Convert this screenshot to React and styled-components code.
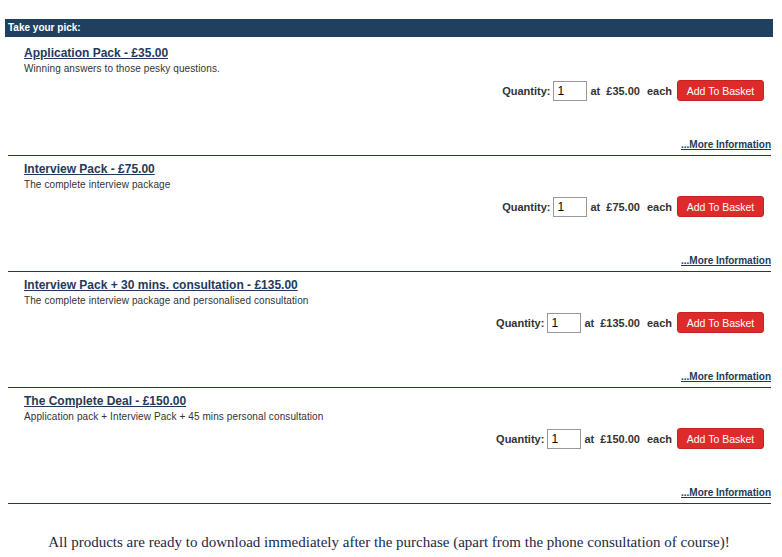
import React from "react";
import styled, { createGlobalStyle } from "styled-components";

const Global = createGlobalStyle`
  html, body { margin: 0; padding: 0; background: #fff; }
  body { font-family: "Liberation Sans", Arial, sans-serif; }
`;

const Page = styled.div`
  width: 768px;
  padding: 19px 0 0 5px;
`;

const Header = styled.div`
  height: 18px;
  background: #1f405e;
  color: #fff;
  font-size: 10px;
  font-weight: bold;
  line-height: 18px;
  padding-left: 3px;
`;

const List = styled.div`
  margin: 0 2px 0 3px;
`;

const Product = styled.div`
  display: flex;
  flex-direction: column;
  box-sizing: border-box;
  height: ${(p) => (p.$first ? 119 : 116)}px;
  padding: ${(p) => (p.$first ? 9 : 6)}px 0 4px 16px;
  border-bottom: 1px solid #1f3a55;
`;

const Title = styled.a`
  font-size: 12px;
  line-height: 14px;
  font-weight: bold;
  color: #1f3a5a;
  text-decoration: underline;
  align-self: flex-start;
`;

const Desc = styled.div`
  font-size: 10px;
  line-height: 13px;
  letter-spacing: 0.1px;
  color: #333;
  margin-top: 2px;
`;

const BuyRow = styled.div`
  display: flex;
  justify-content: flex-end;
  align-items: center;
  margin-top: 5px;
  padding-right: 7px;
  font-size: 11px;
  font-weight: bold;
  color: #333;
`;

const Label = styled.span`
  margin-right: ${(p) => p.$mr || 0}px;
`;

const QtyInput = styled.input`
  box-sizing: border-box;
  width: 34px;
  height: 20px;
  border: 1px solid #999;
  font-family: "Liberation Sans", Arial, sans-serif;
  font-size: 12px;
  padding: 0 3px;
  margin-right: 3px;
  color: #000;
`;

const BasketButton = styled.button`
  box-sizing: border-box;
  width: 87px;
  height: 21px;
  background: #dd2a2a;
  border: 1px solid #c62222;
  border-radius: 3px;
  color: #fff;
  font-family: "Liberation Sans", Arial, sans-serif;
  font-size: 10.5px;
  padding: 0;
  cursor: pointer;
`;

const MoreInfo = styled.a`
  margin-top: auto;
  align-self: flex-end;
  font-size: 10px;
  line-height: 13px;
  font-weight: bold;
  color: #1f3a5a;
  text-decoration: underline;
`;

const Footer = styled.div`
  padding-top: 29px;
  text-align: center;
  font-family: "Liberation Serif", "Times New Roman", serif;
  font-size: 15px;
  line-height: 18px;
  color: #1c2848;
`;

const products = [
  { title: "Application Pack - £35.00", desc: "Winning answers to those pesky questions.", price: "£35.00" },
  { title: "Interview Pack - £75.00", desc: "The complete interview package", price: "£75.00" },
  { title: "Interview Pack + 30 mins. consultation - £135.00", desc: "The complete interview package and personalised consultation", price: "£135.00" },
  { title: "The Complete Deal - £150.00", desc: "Application pack + Interview Pack + 45 mins personal consultation", price: "£150.00" },
];

export default function App() {
  return (
    <>
      <Global />
      <Page>
        <Header>Take your pick:</Header>
        <List>
          {products.map((p, i) => (
            <Product key={i} $first={i === 0}>
              <Title href="#">{p.title}</Title>
              <Desc>{p.desc}</Desc>
              <BuyRow>
                <Label $mr={3}>Quantity:</Label>
                <QtyInput defaultValue="1" />
                <Label $mr={6}>at</Label>
                <Label $mr={7}>{p.price}</Label>
                <Label $mr={5}>each</Label>
                <BasketButton>Add To Basket</BasketButton>
              </BuyRow>
              <MoreInfo href="#">...More Information</MoreInfo>
            </Product>
          ))}
        </List>
        <Footer>
          All products are ready to download immediately after the purchase (apart from the phone consultation of course)!
        </Footer>
      </Page>
    </>
  );
}
